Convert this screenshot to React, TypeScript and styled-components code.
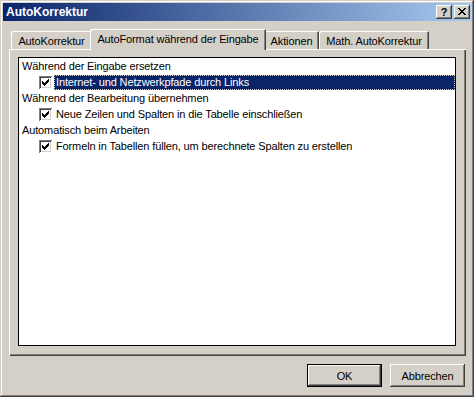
import React from "react";
import styled, { createGlobalStyle, css } from "styled-components";

interface ListEntry {
  id: string;
  kind: "group" | "option";
  label: string;
  checked?: boolean;
  selected?: boolean;
}

interface TabItem {
  label: string;
  width: number;
  active?: boolean;
}

const GlobalStyle = createGlobalStyle`
  html, body {
    margin: 0;
    padding: 0;
    background: #d4d0c8;
  }
  body {
    font-family: "Liberation Sans", Arial, sans-serif;
    font-size: 11px;
    letter-spacing: -0.13px;
    color: #000;
  }
`;

// klassischer 3D-Rahmen (erhaben)
const raised = css`
  box-shadow: inset -1px -1px #404040, inset 1px 1px #ffffff,
    inset -2px -2px #808080, inset 2px 2px #d4d0c8;
`;

const Window = styled.div`
  width: 474px;
  height: 397px;
  box-sizing: border-box;
  padding: 3px;
  background: #d4d0c8;
  display: flex;
  flex-direction: column;
  box-shadow: inset -1px -1px #404040, inset 1px 1px #d4d0c8,
    inset -2px -2px #808080, inset 2px 2px #ffffff;
`;

const TitleBar = styled.div`
  height: 18px;
  flex: none;
  display: flex;
  align-items: center;
  padding: 0 1px 0 3px;
  background: linear-gradient(to right, #0a246a, #a6caf0);
`;

const Title = styled.span`
  color: #fff;
  font-weight: bold;
  font-size: 12px;
  letter-spacing: 0;
  line-height: 18px;
`;

const CaptionButtons = styled.div`
  margin-left: auto;
  display: flex;
  gap: 2px;
`;

const CaptionButton = styled.div`
  width: 16px;
  height: 14px;
  box-sizing: border-box;
  background: #d4d0c8;
  ${raised};
  display: flex;
  align-items: center;
  justify-content: center;
  font-weight: bold;
  font-size: 11px;
  line-height: 14px;
  padding-bottom: 1px;
`;

const Body = styled.div`
  flex: 1;
  display: flex;
  flex-direction: column;
  padding: 8px 5px 0 6px;
`;

const TabRow = styled.div`
  display: flex;
  align-items: flex-end;
  height: 20px;
  padding-left: 2px;
`;

const Tab = styled.div<{ $width: number; $active?: boolean }>`
  width: ${(p) => p.$width}px;
  height: 18px;
  box-sizing: border-box;
  flex: none;
  display: flex;
  justify-content: center;
  padding-top: 4px;
  line-height: 13px;
  white-space: nowrap;
  background: #d4d0c8;
  border-radius: 2px 2px 0 0;
  box-shadow: inset 1px 1px #ffffff, inset -1px 0 #404040, inset -2px 0 #808080;

  ${(p) =>
    p.$active &&
    css`
      height: 21px;
      margin: 0 -2px -1px;
      position: relative;
      z-index: 1;
    `}
`;

const Panel = styled.div`
  height: 307px;
  box-sizing: border-box;
  flex: none;
  display: flex;
  padding: 8px 10px 10px 9px;
  background: #d4d0c8;
  box-shadow: inset 1px 1px #ffffff, inset -1px -1px #404040,
    inset -2px -2px #808080;
`;

const ListBox = styled.div`
  flex: 1;
  background: #fff;
  border: 1px solid #000;
  display: flex;
  flex-direction: column;
`;

const GroupRow = styled.div`
  height: 16px;
  line-height: 16px;
  padding-left: 3px;
  white-space: nowrap;
`;

const OptionRow = styled.div`
  height: 16px;
  display: flex;
  align-items: center;
  padding-left: 20px;
`;

const CheckBox = styled.div`
  width: 13px;
  height: 13px;
  box-sizing: border-box;
  flex: none;
  margin-top: 1px;
  background: #fff;
  display: flex;
  align-items: center;
  justify-content: center;
  box-shadow: inset 1px 1px #808080, inset -1px -1px #ffffff,
    inset 2px 2px #404040, inset -2px -2px #d4d0c8;
`;

const OptionLabel = styled.div<{ $selected?: boolean }>`
  flex: 1;
  height: 15px;
  margin-left: 2px;
  padding-left: 2px;
  line-height: 15px;
  white-space: nowrap;

  ${(p) =>
    p.$selected &&
    css`
      background: #0a246a;
      color: #fff;
      outline: 1px dotted #d4d0c8;
      outline-offset: -1px;
    `}
`;

const Footer = styled.div`
  display: flex;
  justify-content: flex-end;
  gap: 8px;
  margin-top: 8px;
  padding-right: 1px;
`;

const Button = styled.div<{ $default?: boolean }>`
  width: 75px;
  height: 23px;
  box-sizing: border-box;
  display: flex;
  align-items: center;
  justify-content: center;
  background: #d4d0c8;
  ${raised};

  ${(p) =>
    p.$default &&
    css`
      box-shadow: inset 0 0 0 1px #000000, inset -2px -2px #404040,
        inset 2px 2px #ffffff, inset -3px -3px #808080;
    `}
`;

const CheckMark: React.FC = () => (
  <svg width="7" height="7" viewBox="0 0 7 7" shapeRendering="crispEdges">
    <path
      d="M0 2h1v1h1v1h1v-1h1v-1h1v-1h1v-1h1v3h-1v1h-1v1h-1v1h-1v1h-1v-1h-1v-1h-1z"
      fill="#000"
    />
  </svg>
);

const CloseGlyph: React.FC = () => (
  <svg width="8" height="7" viewBox="0 0 8 7" shapeRendering="crispEdges">
    <path
      d="M0 0h2v1h1v1h2v-1h1v-1h2v1h-1v1h-1v1h-1v1h1v1h1v1h1v1h-2v-1h-1v-1h-2v1h-1v1h-2v-1h1v-1h1v-1h1v-1h-1v-1h-1v-1h-1z"
      fill="#000"
    />
  </svg>
);

// aktiver Reiter ist 4px breiter, ragt je 2px in die Nachbarn
const tabs: TabItem[] = [
  { label: "AutoKorrektur", width: 81 },
  { label: "AutoFormat während der Eingabe", width: 176, active: true },
  { label: "Aktionen", width: 55 },
  { label: "Math. AutoKorrektur", width: 110 },
];

const entries: ListEntry[] = [
  { id: "g1", kind: "group", label: "Während der Eingabe ersetzen" },
  {
    id: "o1",
    kind: "option",
    label: "Internet- und Netzwerkpfade durch Links",
    checked: true,
    selected: true,
  },
  { id: "g2", kind: "group", label: "Während der Bearbeitung übernehmen" },
  {
    id: "o2",
    kind: "option",
    label: "Neue Zeilen und Spalten in die Tabelle einschließen",
    checked: true,
  },
  { id: "g3", kind: "group", label: "Automatisch beim Arbeiten" },
  {
    id: "o3",
    kind: "option",
    label: "Formeln in Tabellen füllen, um berechnete Spalten zu erstellen",
    checked: true,
  },
];

const App: React.FC = () => {
  return (
    <>
      <GlobalStyle />
      <Window>
        <TitleBar>
          <Title>AutoKorrektur</Title>
          <CaptionButtons>
            <CaptionButton>?</CaptionButton>
            <CaptionButton>
              <CloseGlyph />
            </CaptionButton>
          </CaptionButtons>
        </TitleBar>

        <Body>
          <TabRow>
            {tabs.map((tab) => (
              <Tab key={tab.label} $width={tab.width} $active={tab.active}>
                {tab.label}
              </Tab>
            ))}
          </TabRow>

          <Panel>
            <ListBox>
              {entries.map((entry) =>
                entry.kind === "group" ? (
                  <GroupRow key={entry.id}>{entry.label}</GroupRow>
                ) : (
                  <OptionRow key={entry.id}>
                    <CheckBox>{entry.checked && <CheckMark />}</CheckBox>
                    <OptionLabel $selected={entry.selected}>
                      {entry.label}
                    </OptionLabel>
                  </OptionRow>
                )
              )}
            </ListBox>
          </Panel>

          <Footer>
            <Button $default>OK</Button>
            <Button>Abbrechen</Button>
          </Footer>
        </Body>
      </Window>
    </>
  );
};

export default App;
